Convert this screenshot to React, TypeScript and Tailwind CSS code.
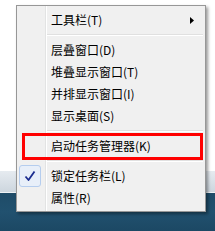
import React from "react";

const font = { fontFamily: '"Noto Sans CJK SC", "Liberation Sans", sans-serif' };

function Row({ label, arrow, checked }: { label: string; arrow?: boolean; checked?: boolean }) {
  return (
    <div className="relative flex h-[22px] items-center pl-[32px] text-[12px] leading-none text-black">
      {checked && (
        <div className="absolute left-0 top-0 flex h-[22px] w-[22px] items-center justify-center rounded-[3px] border border-[#b5cdee] bg-[#e8eff9]">
          <svg width="12" height="12" viewBox="0 0 12 12">
            <path d="M1.5 6.5 L4.5 10 L10.5 1.5" fill="none" stroke="#1b2c8f" strokeWidth="1.8" strokeLinejoin="round" />
          </svg>
        </div>
      )}
      <span>{label}</span>
      {arrow && (
        <svg className="absolute left-[171px] top-[8px]" width="4" height="7" viewBox="0 0 4 7">
          <path d="M0 0 L4 3.5 L0 7 Z" fill="#000" />
        </svg>
      )}
    </div>
  );
}

function Sep() {
  return (
    <div className="flex h-[8px] flex-col pt-[3px] pl-[28px]">
      <div className="h-px bg-[#e0e0e0]" />
      <div className="h-px bg-white" />
    </div>
  );
}

export default function App() {
  return (
    <div className="relative h-[231px] w-[215px] overflow-hidden bg-white" style={font}>
      <div className="flex h-full flex-col">
        <div className="h-[171px] bg-white" />
        <div className="h-[21px] bg-gradient-to-b from-[#e6ebf0] to-[#cdd6de]" />
        <div className="h-px bg-[#eef2f5]" />
        <div className="flex-1 bg-gradient-to-b from-[#1f4c68] via-[#21516f] to-[#1c4864]" />
      </div>

      <div className="absolute left-[16px] top-[5px] h-[207px] w-[190px] border border-[#979797] bg-[#f0f0f0] px-[2px] pt-[3px] shadow-[2px_2px_3px_rgba(0,0,0,0.4)]">
        <div className="absolute bottom-0 left-[28px] top-0 w-px bg-[#e2e3e3]" />
        <div className="absolute bottom-0 left-[29px] top-0 w-px bg-white" />
        <div className="relative">
          <Row label="工具栏(T)" arrow />
          <Sep />
          <Row label="层叠窗口(D)" />
          <Row label="堆叠显示窗口(T)" />
          <Row label="并排显示窗口(I)" />
          <Row label="显示桌面(S)" />
          <Sep />
          <Row label="启动任务管理器(K)" />
          <Sep />
          <Row label="锁定任务栏(L)" checked />
          <Row label="属性(R)" />
        </div>
        <div className="absolute left-[5px] top-[127px] h-[27px] w-[181px] border-[3px] border-[#ff0000]" />
      </div>
    </div>
  );
}
